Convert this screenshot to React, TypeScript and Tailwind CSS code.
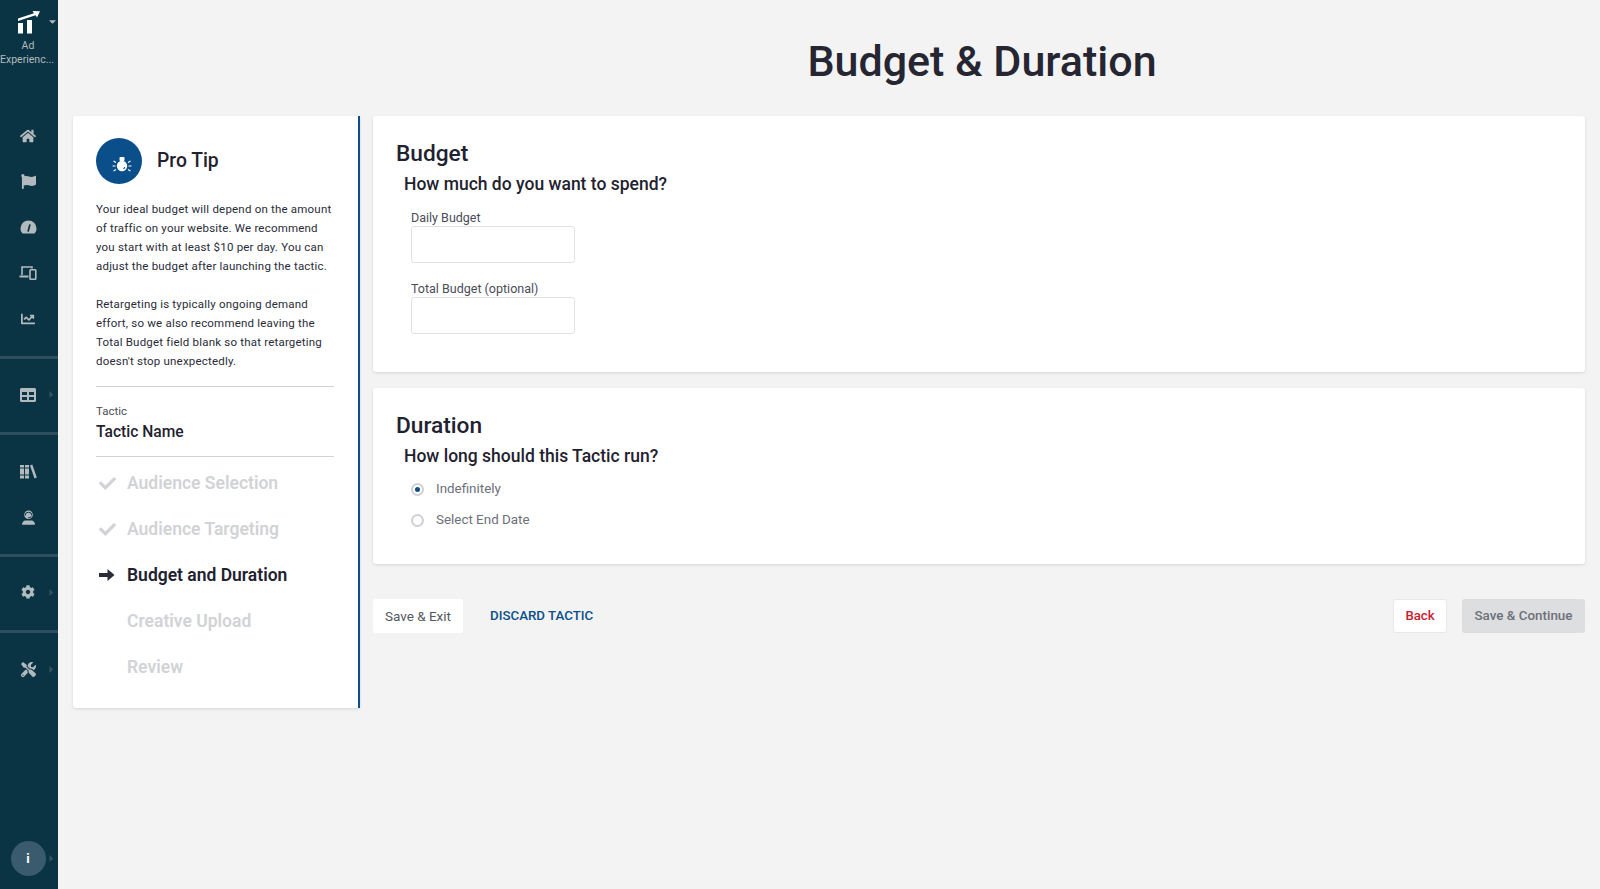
import { FaHome, FaFlag, FaChartLine, FaTable, FaCog, FaTools, FaCheck, FaCaretDown, FaCaretRight } from "react-icons/fa";

function Gauge() {
  return (
    <svg width="17" height="14" viewBox="0 0 17 14">
      <path d="M8.500 0.500a8 8 0 0 1 8 8c0 1.800-.5 3.300-1.600 4.500-.3.400-.7.500-1.200.5H3.300c-.5 0-.9-.1-1.200-.5C1 11.800.5 10.300.5 8.500a8 8 0 0 1 8-8z" fill="currentColor" />
      <path d="M8.200 11 9.800 5" stroke="#0a3444" strokeWidth="1.700" strokeLinecap="round" />
    </svg>
  );
}

function Devices() {
  return (
    <svg width="18" height="16" viewBox="0 0 18 16" fill="none" stroke="currentColor" strokeWidth="1.600">
      <path d="M3 10V2h10v1.500" />
      <path d="M0.500 11.500h9" strokeWidth="2" />
      <rect x="11" y="4.800" width="5.800" height="9.500" rx="0.800" />
    </svg>
  );
}

function Books() {
  return (
    <svg width="17" height="15" viewBox="0 0 17 15" fill="currentColor">
      <path d="M0 1h4v13.500H0zM5 1h4v13.500H5z" />
      <path d="M0 3.500h9v1H0zM0 10.500h9v1H0z" fill="#0a3444" />
      <path d="M10 1.400 12.300 0.500 16.800 13.500 14.500 14.400z" />
    </svg>
  );
}

function Headset() {
  return (
    <svg width="15" height="15" viewBox="0 0 15 15" fill="currentColor">
      <circle cx="7.500" cy="4.800" r="4.300" />
      <path d="M4.200 5.500a3.300 3.300 0 0 1 6.600 0" fill="none" stroke="#0a3444" strokeWidth="1" />
      <path d="M10.500 6.800 7 8" stroke="#0a3444" strokeWidth="0.900" />
      <path d="M1 14.800c0-2.700 1.700-4.300 3.500-4.300h6c1.800 0 3.500 1.600 3.500 4.300z" />
    </svg>
  );
}

function Logo() {
  return (
    <svg width="24" height="24" viewBox="0 0 24 24" fill="white">
      <path d="M1 8.500 17 3.200 15.500 1 23 1.200 20 7.500 18.600 5.300 1 11z" />
      <rect x="1" y="13" width="5" height="10.500" />
      <rect x="10" y="10" width="5" height="13.500" />
    </svg>
  );
}

function Bulb() {
  return (
    <svg width="20" height="17" viewBox="0 0 20 17" fill="none" stroke="white" strokeWidth="1.100">
      <circle cx="10" cy="10" r="5.200" fill="white" stroke="none" />
      <rect x="7.500" y="1" width="5" height="4" rx="1" fill="white" stroke="none" />
      <path d="M1.500 5l2.500 1.500M0.500 10h3M1.500 15l2.500-1.500M18.500 5l-2.500 1.500M19.500 10h-3M18.500 15l-2.500-1.500" />
      <path d="M11.500 12.800a3 3 0 0 0 1.300-1.700" stroke="#0b4f8a" />
    </svg>
  );
}

function ThickArrow() {
  return (
    <svg width="16" height="14" viewBox="0 0 16 14" fill="#2a2c38">
      <path d="M0 5h8.500V1l7 6-7 6V9H0z" />
    </svg>
  );
}

function Divider() {
  return <div className="h-[3px] bg-[#2e4f5e]" />;
}

function NavIcon({ children, arrow }: { children: React.ReactNode; arrow?: boolean }) {
  return (
    <div className="relative h-[45.800px] flex items-center justify-center text-[#b3babe] text-[16px] pr-[2px]">
      {children}
      {arrow && <FaCaretRight className="absolute right-[1px] text-[#33525f] text-[11px]" />}
    </div>
  );
}

function Step({ label, state }: { label: string; state: "done" | "active" | "todo" }) {
  return (
    <div className={`h-[46px] flex items-center text-[17.500px] font-semibold ${state === "active" ? "text-[#1f2230]" : "text-[#d1d3d6]"}`}>
      <span className="w-[31px] pl-[3px] text-[17px]">
        {state === "done" && <FaCheck />}
        {state === "active" && <ThickArrow />}
      </span>
      {label}
    </div>
  );
}

function Field({ label }: { label: string }) {
  return (
    <div className="w-[164px]">
      <div className="text-[12.500px] leading-[16px] text-[#4a4d57]">{label}</div>
      <input className="block w-full h-[37px] bg-white border border-[#e2e2e4] rounded-[3px]" type="text" />
    </div>
  );
}

function Radio({ label, checked }: { label: string; checked?: boolean }) {
  return (
    <div className="h-[31px] flex items-center text-[13.400px] text-[#6d7079]">
      <span className="w-[13px] h-[13px] rounded-full border-2 border-[#cfd0d3] flex items-center justify-center mr-[12px]">
        {checked && <span className="w-[5px] h-[5px] rounded-full bg-[#0b4f8a]" />}
      </span>
      {label}
    </div>
  );
}

export default function App() {
  return (
    <div className="flex h-screen w-full bg-[#f3f3f3] font-['Roboto',sans-serif] overflow-hidden">
      <div className="w-[58px] shrink-0 bg-[#0a3444] flex flex-col">
        <div className="relative h-[113px] pt-[10px] flex flex-col items-center">
          <Logo />
          <FaCaretDown className="absolute right-0 top-[16px] text-[#b3babe] text-[11px]" />
          <div className="text-[10.500px] leading-[13.500px] mt-[5px] text-[#b3babe] text-center pr-[2px]">Ad</div>
          <div className="text-[10.500px] leading-[13.500px] text-[#b3babe] whitespace-nowrap pr-[4px]">Experienc...</div>
        </div>
        <NavIcon><FaHome /></NavIcon>
        <NavIcon><FaFlag className="text-[15px]" /></NavIcon>
        <NavIcon><Gauge /></NavIcon>
        <NavIcon><Devices /></NavIcon>
        <NavIcon><FaChartLine className="text-[14px]" /></NavIcon>
        <div className="h-[14px]" />
        <Divider />
        <div className="h-[13px]" />
        <NavIcon arrow><FaTable /></NavIcon>
        <div className="h-[14px]" />
        <Divider />
        <div className="h-[14px]" />
        <NavIcon><Books /></NavIcon>
        <NavIcon><Headset /></NavIcon>
        <div className="h-[14px]" />
        <Divider />
        <div className="h-[12px]" />
        <NavIcon arrow><FaCog className="text-[14px]" /></NavIcon>
        <div className="h-[15px]" />
        <Divider />
        <div className="h-[13px]" />
        <NavIcon arrow><FaTools className="text-[15px]" /></NavIcon>
        <div className="relative mt-auto mb-[13px] flex justify-center pr-[2px]">
          <div className="w-[35px] h-[35px] rounded-full bg-[#3a5a6e] flex items-center justify-center text-white text-[13px] font-bold">i</div>
          <FaCaretRight className="absolute right-[1px] top-[12px] text-[#33525f] text-[11px]" />
        </div>
      </div>

      <div className="flex-1 min-w-0 px-[15px]">
        <div className="h-[116px] pl-[306px] flex justify-center pt-[33px]">
          <h1 className="text-[43px] leading-[56px] font-medium text-[#252632]">Budget &amp; Duration</h1>
        </div>
        <div className="flex gap-[13.500px] items-start">
          <div className="w-[286.500px] h-[592px] shrink-0 bg-white rounded-l-[3px] border-r-[2.500px] border-[#0b4f8a] shadow-[0_1px_3px_rgba(0,0,0,0.12)] pt-[22px] pl-[23px] pr-[24px]">
            <div className="flex items-center gap-[15px]">
              <div className="w-[46px] h-[46px] rounded-full bg-[#0b4f8a] flex items-center justify-center pt-[7px] pl-[5px]"><Bulb /></div>
              <div className="pt-[1px] text-[19.300px] font-medium text-[#1f2230]">Pro Tip</div>
            </div>
            <div className="mt-[16px] text-[11.500px] leading-[19px] tracking-[0.2px] text-[#2a2c38] whitespace-nowrap">
              <p>Your ideal budget will depend on the amount<br />of traffic on your website. We recommend<br />you start with at least $10 per day. You can<br />adjust the budget after launching the tactic.</p>
              <p className="mt-[19px]">Retargeting is typically ongoing demand<br />effort, so we also recommend leaving the<br />Total Budget field blank so that retargeting<br />doesn't stop unexpectedly.</p>
            </div>
            <div className="mt-[15px] border-t border-[#d2d3d6] pt-[17px] pb-[13px] border-b">
              <div className="text-[11.500px] leading-[14px] text-[#4a4d57]">Tactic</div>
              <div className="mt-[3px] text-[15.600px] leading-[22px] font-medium text-[#1f2230]">Tactic Name</div>
            </div>
            <div className="pt-[3px]">
              <Step label="Audience Selection" state="done" />
              <Step label="Audience Targeting" state="done" />
              <Step label="Budget and Duration" state="active" />
              <Step label="Creative Upload" state="todo" />
              <Step label="Review" state="todo" />
            </div>
          </div>

          <div className="flex-1 min-w-0">
            <div className="h-[256px] bg-white rounded-[3px] shadow-[0_1px_3px_rgba(0,0,0,0.12)] pt-[24px] pl-[23px]">
              <h2 className="text-[22.700px] leading-[28px] font-medium text-[#1f2230]">Budget</h2>
              <h3 className="ml-[8px] mt-[2px] text-[17.500px] leading-[28px] font-medium text-[#1f2230]">How much do you want to spend?</h3>
              <div className="ml-[15px] mt-[12px] flex flex-col gap-[18px]">
                <Field label="Daily Budget" />
                <Field label="Total Budget (optional)" />
              </div>
            </div>
            <div className="mt-[16px] h-[176px] bg-white rounded-[3px] shadow-[0_1px_3px_rgba(0,0,0,0.12)] pt-[24px] pl-[23px]">
              <h2 className="text-[22.700px] leading-[28px] font-medium text-[#1f2230]">Duration</h2>
              <h3 className="ml-[8px] mt-[2px] text-[17.500px] leading-[28px] font-medium text-[#1f2230]">How long should this Tactic run?</h3>
              <div className="ml-[15px] mt-[4px]">
                <Radio label="Indefinitely" checked />
                <Radio label="Select End Date" />
              </div>
            </div>
            <div className="mt-[35px] flex items-center">
              <button className="h-[34px] w-[90px] bg-white rounded-[3px] text-[13.500px] text-[#55585f]">Save &amp; Exit</button>
              <button className="ml-[27px] text-[13.300px] font-medium text-[#0b4f8a]">DISCARD TACTIC</button>
              <button className="ml-auto h-[34px] w-[54px] bg-white rounded-[3px] border border-[#e8e8e8] text-[13.200px] font-medium text-[#c8202f]">Back</button>
              <button className="ml-[15px] h-[34px] w-[123px] bg-[#dddee0] rounded-[3px] text-[13.400px] font-medium text-[#6d7079]">Save &amp; Continue</button>
            </div>
          </div>
        </div>
      </div>
    </div>
  );
}
